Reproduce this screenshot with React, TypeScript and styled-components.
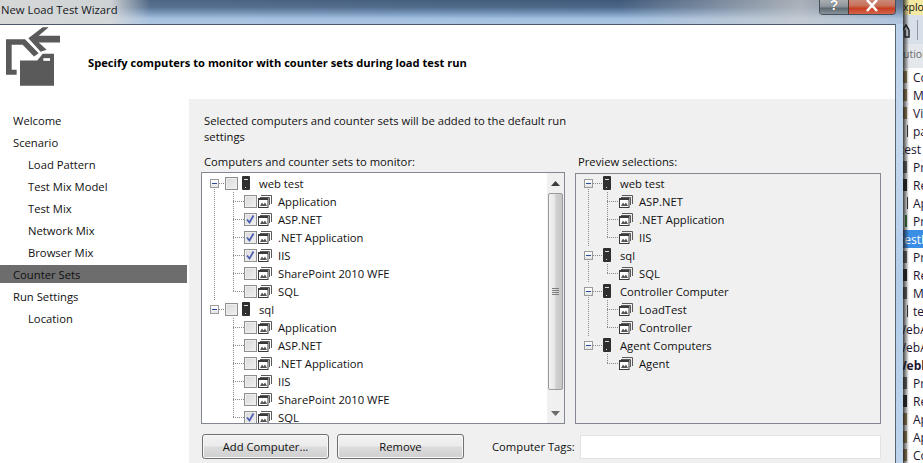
import React from "react";
import styled, { createGlobalStyle } from "styled-components";

const GlobalStyle = createGlobalStyle`
  html, body { margin: 0; padding: 0; width: 923px; height: 463px; overflow: hidden; }
  body { font-family: "Open Sans", "Liberation Sans", sans-serif; font-size: 11.25px; color: #111; }
`;

const LINE = "#8a8a8a";
const dotsH = `repeating-linear-gradient(90deg, ${LINE} 0 1px, transparent 1px 2px)`;
const dotsV = `repeating-linear-gradient(180deg, ${LINE} 0 1px, transparent 1px 2px)`;

const Page = styled.div`
  display: flex;
  width: 923px;
  height: 463px;
  overflow: hidden;
`;

const Window = styled.div`
  display: flex;
  flex-direction: column;
  width: 903px;
  flex: none;
  padding-right: 7px;
  box-sizing: border-box;
  background: linear-gradient(180deg, #b9d0ea 0, #c4d9ee 30%, #b3cde9 60%, #bdd4ec 100%);
`;

const TitleBar = styled.div`
  display: flex;
  height: 24px;
  flex: none;
  margin-right: -7px;
  padding-right: 7px;
  background:
    linear-gradient(90deg, rgba(214, 216, 216, 1) 0, rgba(214, 216, 216, 0.95) 110px, rgba(200, 210, 222, 0.1) 150px, rgba(0, 0, 0, 0) 620px, rgba(205, 205, 205, 0.75) 800px, rgba(205, 205, 205, 0.2) 903px),
    linear-gradient(180deg, #41597a 0, #4c6788 30%, #7393b8 55%, #a3c0e0 78%, #a9c4e2 100%);
`;

const TitleText = styled.div`
  flex: 1;
  padding: 1px 0 0 1px;
  font-size: 11.3px;
  line-height: 17px;
  color: #15171a;
`;

const CaptionGroup = styled.div`
  display: flex;
  height: 15px;
  box-sizing: border-box;
  border: 1px solid #46505c;
  border-top: none;
  border-radius: 0 0 4px 4px;
  overflow: hidden;
`;

const CaptionButton = styled.div<{ $w: number; $close?: boolean }>`
  display: flex;
  justify-content: center;
  width: ${(p) => p.$w}px;
  background: ${(p) =>
    p.$close
      ? "linear-gradient(180deg, #c98a78 0, #c9705a 40%, #c63f22 60%, #d4654c 100%)"
      : "linear-gradient(180deg, #a9adb0 0, #8f979d 45%, #5f6a72 60%, #88929a 100%)"};
  & + & { border-left: 1px solid #4d3a38; }
`;

const HelpGlyph = styled.span`
  font: bold 14px/11px "Liberation Sans", sans-serif;
  color: #fff;
  text-shadow: 0 0 1px #333;
`;

const Client = styled.div`
  flex: 1;
  display: flex;
  flex-direction: column;
  min-height: 0;
  background: #fff;
  border-top: 1px solid #4b5a6b;
  border-right: 1px solid #5a6570;
`;

const Header = styled.div`
  display: flex;
  align-items: flex-start;
  height: 74px;
  flex: none;
  box-sizing: border-box;
  padding: 2px 0 0 6px;
`;

const HeaderTitle = styled.div`
  margin: 28px 0 0 28px;
  font-size: 11.15px;
  font-weight: 700;
  line-height: 16px;
  color: #000;
`;

const Body = styled.div`
  flex: 1;
  display: flex;
  min-height: 0;
`;

const Nav = styled.div`
  display: flex;
  flex-direction: column;
  gap: 4px;
  width: 189px;
  flex: none;
  box-sizing: border-box;
  padding: 12px 2px 0 0;
`;

const NavItem = styled.div<{ $sub?: boolean; $selected?: boolean }>`
  height: 18px;
  line-height: 20px;
  padding-left: ${(p) => (p.$sub ? 28 : 13)}px;
  background: ${(p) => (p.$selected ? "#6d6d6d" : "transparent")};
  color: ${(p) => (p.$selected ? "#101010" : "#111")};
`;

const Content = styled.div`
  flex: 1;
  min-width: 0;
  background: #f0f0f0;
  padding: 14px 14px 0 12px;
`;

const Intro = styled.div`
  width: 368px;
  margin-left: 3px;
  line-height: 16px;
`;

const Columns = styled.div`
  display: flex;
  gap: 10px;
  margin-top: 9px;
`;

const Column = styled.div<{ $w: number }>`
  width: ${(p) => p.$w}px;
  flex: none;
`;

const ColumnLabel = styled.div<{ $pad: number; $gap: number }>`
  line-height: 16px;
  padding-left: ${(p) => p.$pad}px;
  margin-bottom: ${(p) => p.$gap}px;
`;

const TreeBox = styled.div<{ $h: number; $bg: string }>`
  display: flex;
  height: ${(p) => p.$h}px;
  box-sizing: border-box;
  border: 1px solid #828790;
  background: ${(p) => p.$bg};
  overflow: hidden;
`;

const TreeScroll = styled.div<{ $top: number }>`
  flex: 1;
  min-width: 0;
  padding-top: ${(p) => p.$top}px;
`;

const RootItem = styled.div<{ $line: boolean }>`
  background: ${(p) => (p.$line ? `${dotsV} 12px 7px / 1px 100% no-repeat` : "none")};
`;

const RootRow = styled.div`
  display: flex;
  align-items: center;
  height: 18px;
  padding-left: 8px;
`;

const Expander = styled.span`
  display: flex;
  align-items: center;
  justify-content: center;
  width: 9px;
  height: 9px;
  box-sizing: border-box;
  flex: none;
  border: 1px solid #9a9a9a;
  background: linear-gradient(180deg, #fff, #e4e4e4);
  &::before {
    content: "";
    width: 5px;
    height: 1px;
    background: #2a4a9a;
  }
`;

const Dash = styled.span<{ $w: number }>`
  width: ${(p) => p.$w}px;
  height: 1px;
  flex: none;
  background: ${dotsH};
`;

const CheckBox = styled.span`
  display: flex;
  width: 13px;
  height: 13px;
  flex: none;
  box-sizing: border-box;
  border: 1px solid #8e8f8f;
  background: linear-gradient(135deg, #d9d9d9, #f1f1f1);
  box-shadow: inset 0 0 0 1px #eeeeee;
`;

const ServerSlot = styled.span`
  display: flex;
  margin-left: 4px;
`;

const RootLabel = styled.span<{ $left: number }>`
  margin-left: ${(p) => p.$left}px;
  white-space: nowrap;
`;

const ChildRow = styled.div`
  display: flex;
  align-items: center;
  height: 18px;
  padding-left: 31px;
`;

const Elbow = styled.span<{ $w: number; $last: boolean }>`
  align-self: stretch;
  width: ${(p) => p.$w}px;
  flex: none;
  background:
    ${dotsH} 0 9px / 100% 1px no-repeat,
    ${dotsV} 0 0 / 1px ${(p) => (p.$last ? "9px" : "100%")} no-repeat;
`;

const CounterSlot = styled.span`
  display: flex;
  margin-left: 1px;
`;

const ChildLabel = styled.span`
  margin-left: 6px;
  white-space: nowrap;
`;

const ScrollBar = styled.div`
  display: flex;
  flex-direction: column;
  align-items: center;
  width: 17px;
  flex: none;
  background: #f0f0f0;
`;

const ScrollEnd = styled.div`
  display: flex;
  align-items: center;
  justify-content: center;
  height: 20px;
  flex: none;
`;

const ScrollTrack = styled.div`
  flex: 1;
  width: 100%;
  min-height: 0;
`;

const ScrollThumb = styled.div`
  display: flex;
  flex-direction: column;
  align-items: center;
  justify-content: center;
  gap: 1px;
  height: 197px;
  margin: 0 1px;
  box-sizing: border-box;
  border: 1px solid #9b9b9b;
  border-radius: 2px;
  background: linear-gradient(90deg, #f2f2f2 0, #e9e9e9 40%, #d0d0d0 55%, #c6c6c6 100%);
`;

const Grip = styled.span`
  width: 7px;
  height: 1px;
  background: #7d7d7d;
`;

const Footer = styled.div`
  display: flex;
  align-items: center;
  margin-top: 10px;
  padding-left: 1px;
`;

const Button = styled.div<{ $w: number; $gap?: number }>`
  width: ${(p) => p.$w}px;
  height: 25px;
  line-height: 23px;
  margin-left: ${(p) => p.$gap ?? 0}px;
  box-sizing: border-box;
  text-align: center;
  border: 1px solid #707070;
  border-radius: 3px;
  background: linear-gradient(180deg, #f3f3f3 0, #ebebeb 48%, #dcdcdc 52%, #cfcfcf 100%);
  box-shadow: inset 0 0 0 1px #f8f8f8;
`;

const TagLabel = styled.span`
  margin-left: 28px;
  white-space: nowrap;
`;

const TagInput = styled.div`
  width: 301px;
  height: 24px;
  margin-left: auto;
  box-sizing: border-box;
  border: 1px solid #dfe3e8;
  background: #fff;
`;

const SidePanel = styled.div`
  position: relative;
  flex: 1;
  min-width: 0;
  background: #fff;
  overflow: hidden;
  font-size: 12px;
  &::after {
    content: "";
    position: absolute;
    inset: 0 auto 0 0;
    width: 6px;
    background: linear-gradient(90deg, rgba(30, 30, 30, 0.85), rgba(60, 60, 60, 0));
  }
`;

const PanelTitle = styled.div`
  height: 15px;
  line-height: 15px;
  font-size: 10.5px;
  background: #f4e9a2;
  color: #111;
`;

const PanelToolbar = styled.div`
  display: flex;
  align-items: center;
  gap: 7px;
  height: 29px;
  background: #d8dfe9;
`;

const ToolbarDivider = styled.span`
  width: 1px;
  height: 20px;
  background: #8d99a8;
`;

const PanelSearch = styled.div`
  height: 24px;
  line-height: 20px;
  box-sizing: border-box;
  font-size: 10.5px;
  background: #e4e8ed;
  color: #6a6a6a;
`;

const PanelRow = styled.div<{ $selected?: boolean; $bold?: boolean; $shift: number }>`
  display: flex;
  align-items: center;
  height: 18px;
  white-space: nowrap;
  background: ${(p) => (p.$selected ? "#3a8ee6" : "transparent")};
  color: ${(p) => (p.$selected ? "#fff" : "#1a1430")};
  font-weight: ${(p) => (p.$bold ? 700 : 400)};
  text-indent: ${(p) => p.$shift}px;
`;

const PanelIcon = styled.span<{ $kind: string }>`
  width: 10px;
  flex: none;
  height: 12px;
  background: ${(p) =>
    p.$kind === "folder" ? "linear-gradient(90deg, #9c8150 0 4px, transparent 4px)"
    : p.$kind === "doc" ? "linear-gradient(90deg, transparent 0 4px, #333 4px 5px, transparent 5px)"
    : p.$kind === "ref" ? "linear-gradient(90deg, #222 0 4px, transparent 4px)"
    : p.$kind === "prop" ? "linear-gradient(90deg, #666 0 4px, transparent 4px)"
    : p.$kind === "green" ? "linear-gradient(90deg, transparent 0 2px, #2e7d32 2px 4px, transparent 4px)"
    : "none"};
`;

const ServerIcon = () => (
  <svg width="8" height="14" viewBox="0 0 8 14">
    <rect width="8" height="14" rx="1" fill="#2f2f2f" />
    <rect x="2" y="3" width="4" height="1" fill="#ddd" />
    <rect x="3" y="11" width="1" height="1" fill="#ddd" />
  </svg>
);

const CounterIcon = () => (
  <svg width="14" height="14" viewBox="0 0 14 14">
    <path d="M3 1.5H13.5V10" fill="none" stroke="#5a5a5a" />
    <path d="M2 3.5H11.5V11" fill="none" stroke="#5a5a5a" />
    <rect x="0.5" y="4.5" width="9.5" height="9" fill="#fff" stroke="#3a3a3a" />
    <rect x="1" y="5" width="9" height="1" fill="#3a3a3a" />
    <path d="M2 12L4 8.5L5.5 10.5L7 8.5L9 12Z" fill="#555" />
  </svg>
);

const CheckMark = () => (
  <svg width="11" height="11" viewBox="0 0 11 11">
    <path d="M2 5.5L4.5 8.5L8.5 1.5" fill="none" stroke="#4a5cb0" strokeWidth="1.7" />
  </svg>
);

const WizardIcon = () => (
  <svg width="54" height="59" viewBox="18 82 162 176">
    <path fill="#5a5a5a" d="M85 115L128 82H146L116 108H180V128H116L140 150L122 156Z" />
    <path fill="#5a5a5a" d="M18 118H75L116 160L102 170L68 135H35V210H50V225H18Z" />
    <path fill="#5a5a5a" d="M60 182H112L128 162H162V258H60Z" />
    <rect x="130" y="175" width="20" height="8" fill="#fff" />
  </svg>
);

type Counter = { name: string; checked?: boolean };
type Root = { name: string; checked?: boolean; counters: Counter[] };

const monitorTree: Root[] = [
  {
    name: "web test",
    counters: [
      { name: "Application" },
      { name: "ASP.NET", checked: true },
      { name: ".NET Application", checked: true },
      { name: "IIS", checked: true },
      { name: "SharePoint 2010 WFE" },
      { name: "SQL" },
    ],
  },
  {
    name: "sql",
    counters: [
      { name: "Application" },
      { name: "ASP.NET" },
      { name: ".NET Application" },
      { name: "IIS" },
      { name: "SharePoint 2010 WFE" },
      { name: "SQL", checked: true },
    ],
  },
];

const previewTree: Root[] = [
  { name: "web test", counters: [{ name: "ASP.NET" }, { name: ".NET Application" }, { name: "IIS" }] },
  { name: "sql", counters: [{ name: "SQL" }] },
  { name: "Controller Computer", counters: [{ name: "LoadTest" }, { name: "Controller" }] },
  { name: "Agent Computers", counters: [{ name: "Agent" }] },
];

const Tree: React.FC<{ roots: Root[]; checks?: boolean }> = ({ roots, checks }) => (
  <TreeScroll $top={checks ? 1 : 0}>
    {roots.map((root, i) => (
      <RootItem key={root.name} $line={i < roots.length - 1}>
        <RootRow>
          <Expander />
          <Dash $w={checks ? 6 : 10} />
          {checks && <CheckBox />}
          {checks ? <ServerSlot><ServerIcon /></ServerSlot> : <ServerIcon />}
          <RootLabel $left={9}>{root.name}</RootLabel>
        </RootRow>
        {root.counters.map((c, j) => (
          <ChildRow key={c.name}>
            <Elbow $w={checks ? 11 : 12} $last={j === root.counters.length - 1} />
            {checks && <CheckBox>{c.checked && <CheckMark />}</CheckBox>}
            {checks ? <CounterSlot><CounterIcon /></CounterSlot> : <CounterIcon />}
            <ChildLabel>{c.name}</ChildLabel>
          </ChildRow>
        ))}
      </RootItem>
    ))}
  </TreeScroll>
);

const navItems = [
  { name: "Welcome" },
  { name: "Scenario" },
  { name: "Load Pattern", sub: true },
  { name: "Test Mix Model", sub: true },
  { name: "Test Mix", sub: true },
  { name: "Network Mix", sub: true },
  { name: "Browser Mix", sub: true },
  { name: "Counter Sets", selected: true },
  { name: "Run Settings" },
  { name: "Location", sub: true },
];

const panelRows = [
  { icon: "folder", text: "Co" },
  { icon: "folder", text: "M" },
  { icon: "folder", text: "Vi" },
  { icon: "doc", text: "pa" },
  { icon: "", text: "test", shift: -3 },
  { icon: "prop", text: "Pr" },
  { icon: "ref", text: "Re" },
  { icon: "doc", text: "Ap" },
  { icon: "green", text: "Pr" },
  { icon: "", text: "testF", selected: true, shift: -3 },
  { icon: "prop", text: "Pr" },
  { icon: "ref", text: "Re" },
  { icon: "prop", text: "M" },
  { icon: "doc", text: "te" },
  { icon: "", text: "WebA", shift: -8 },
  { icon: "", text: "WebA", shift: -8 },
  { icon: "", text: "Webl", bold: true, shift: -8 },
  { icon: "prop", text: "Pr" },
  { icon: "ref", text: "Re" },
  { icon: "folder", text: "Ap" },
  { icon: "folder", text: "Ap" },
  { icon: "folder", text: "Co" },
];

export default function App() {
  return (
    <Page>
      <GlobalStyle />
      <Window>
        <TitleBar>
          <TitleText>New Load Test Wizard</TitleText>
          <CaptionGroup>
            <CaptionButton $w={28}><HelpGlyph>?</HelpGlyph></CaptionButton>
            <CaptionButton $w={46} $close>
              <svg width="14" height="12" viewBox="0 0 14 12">
                <path d="M2 0L12 11M12 0L2 11" stroke="#fff" strokeWidth="2.6" fill="none" />
              </svg>
            </CaptionButton>
          </CaptionGroup>
        </TitleBar>
        <Client>
          <Header>
            <WizardIcon />
            <HeaderTitle>Specify computers to monitor with counter sets during load test run</HeaderTitle>
          </Header>
          <Body>
            <Nav>
              {navItems.map((item) => (
                <NavItem key={item.name} $sub={item.sub} $selected={item.selected}>{item.name}</NavItem>
              ))}
            </Nav>
            <Content>
              <Intro>Selected computers and counter sets will be added to the default run settings</Intro>
              <Columns>
                <Column $w={364}>
                  <ColumnLabel $pad={3} $gap={2}>Computers and counter sets to monitor:</ColumnLabel>
                  <TreeBox $h={252} $bg="#fff">
                    <Tree roots={monitorTree} checks />
                    <ScrollBar>
                      <ScrollEnd>
                        <svg width="9" height="5" viewBox="0 0 9 5"><path d="M4.5 0L9 5H0Z" fill="#3c3c3c" /></svg>
                      </ScrollEnd>
                      <ScrollTrack>
                        <ScrollThumb><Grip /><Grip /><Grip /><Grip /></ScrollThumb>
                      </ScrollTrack>
                      <ScrollEnd>
                        <svg width="9" height="5" viewBox="0 0 9 5"><path d="M0 0H9L4.5 5Z" fill="#6a6a6a" /></svg>
                      </ScrollEnd>
                    </ScrollBar>
                  </TreeBox>
                </Column>
                <Column $w={306}>
                  <ColumnLabel $pad={3} $gap={3}>Preview selections:</ColumnLabel>
                  <TreeBox $h={251} $bg="#f0f0f0">
                    <Tree roots={previewTree} />
                  </TreeBox>
                </Column>
              </Columns>
              <Footer>
                <Button $w={127}>Add Computer...</Button>
                <Button $w={127} $gap={8}>Remove</Button>
                <TagLabel>Computer Tags:</TagLabel>
                <TagInput />
              </Footer>
            </Content>
          </Body>
        </Client>
      </Window>
      <SidePanel>
        <PanelTitle>xplo</PanelTitle>
        <PanelToolbar>
          <svg width="7" height="16" viewBox="3 0 7 16"><path d="M3 8L6 3L9 8M5 8V15H9V8" fill="none" stroke="#222" strokeWidth="1.5" /></svg>
          <ToolbarDivider />
        </PanelToolbar>
        <PanelSearch>ution</PanelSearch>
        {panelRows.map((row, i) => (
          <PanelRow key={i} $selected={row.selected} $bold={row.bold} $shift={row.shift ?? 0}>
            {row.icon && <PanelIcon $kind={row.icon} />}
            {row.text}
          </PanelRow>
        ))}
      </SidePanel>
    </Page>
  );
}
